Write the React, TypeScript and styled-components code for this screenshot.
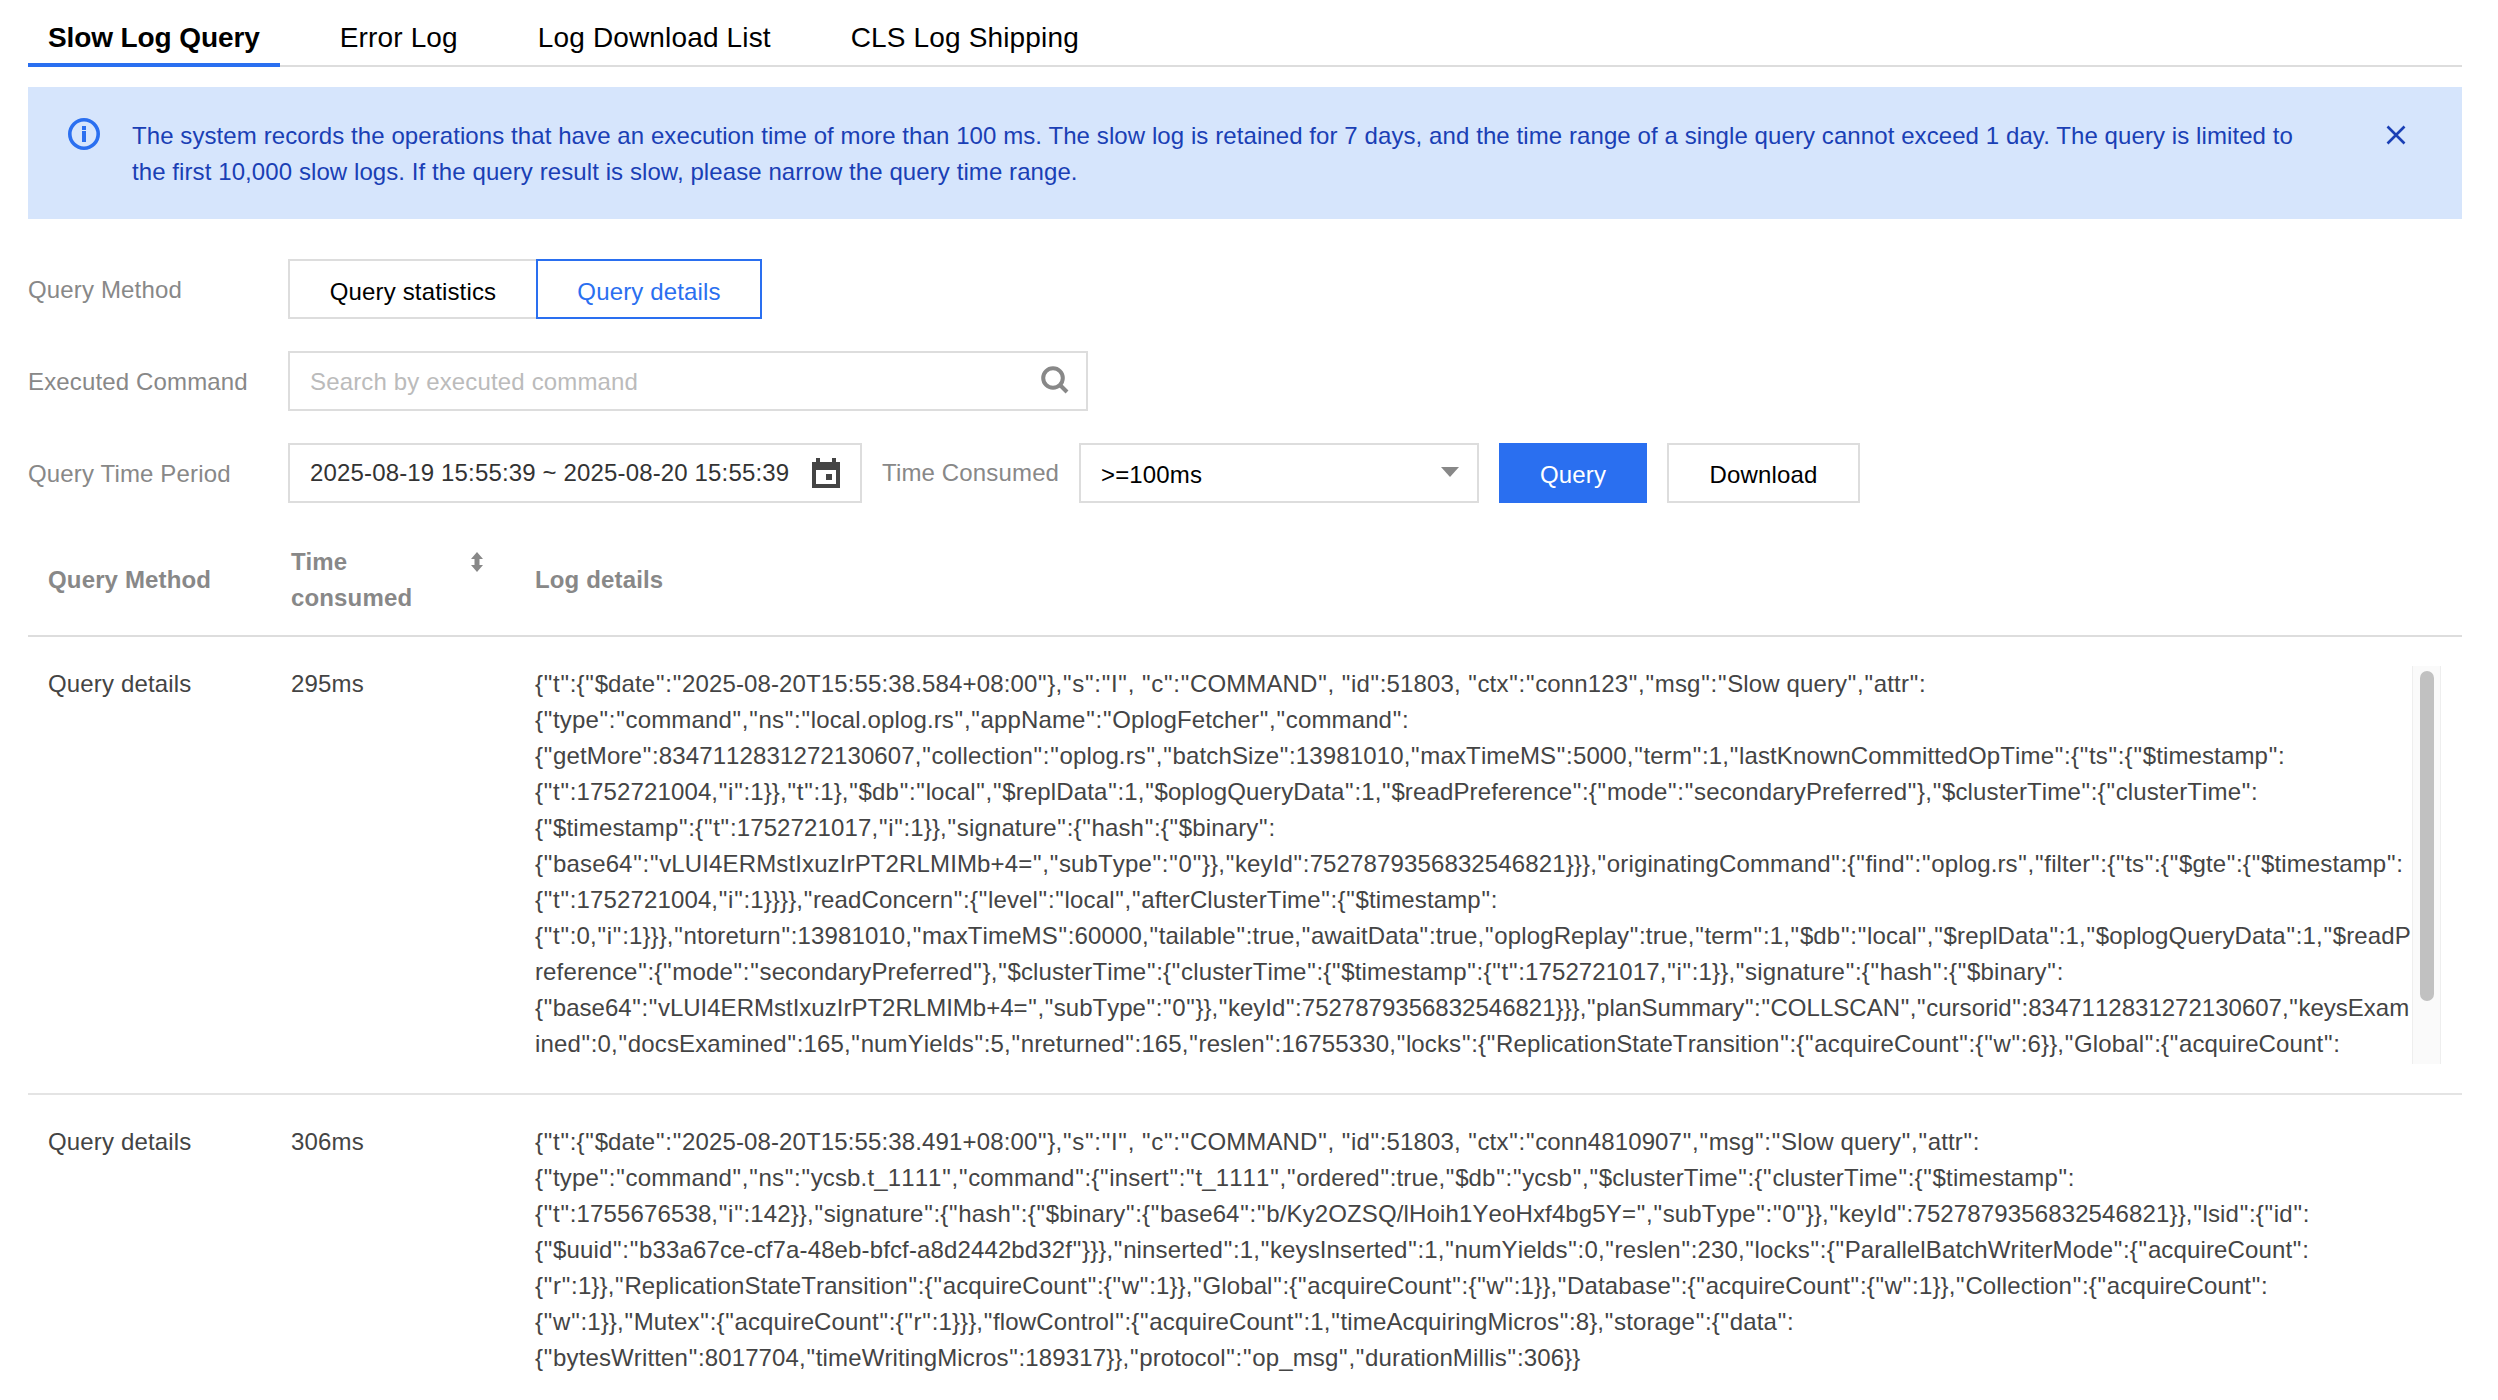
import styled, { createGlobalStyle } from 'styled-components';

const GlobalStyle = createGlobalStyle`
  html, body {
    margin: 0;
    padding: 0;
    background: #fff;
  }
  body {
    font-family: "Liberation Sans", Arial, sans-serif;
    font-size: 24px;
    line-height: 36px;
    letter-spacing: 0.15px;
    color: #444;
  }
  * {
    box-sizing: border-box;
  }
`;

const Page = styled.div`
  width: 2498px;
  height: 1400px;
  padding: 0 36px 0 28px;
  overflow: hidden;
`;

const Tabs = styled.nav`
  display: flex;
  height: 67px;
  border-bottom: 2px solid #ddd;
`;

const Tab = styled.a<{ $active?: boolean }>`
  height: 67px;
  padding: 0 20px;
  margin-right: 40px;
  font-size: 28px;
  line-height: 76px;
  color: #000;
  font-weight: ${(p) => (p.$active ? 700 : 400)};
  letter-spacing: ${(p) => (p.$active ? '-0.1px' : '0.15px')};
  border-bottom: 4px solid ${(p) => (p.$active ? '#2a6ff0' : 'transparent')};
`;

const Alert = styled.div`
  display: flex;
  margin-top: 20px;
  height: 132px;
  padding: 31px 56px 0 40px;
  background: #d6e5fc;
  color: #1a3fb5;
  letter-spacing: 0.085px;
`;

const InfoIcon = styled.svg`
  flex: none;
  width: 32px;
  height: 32px;
  margin-right: 32px;
`;

const AlertText = styled.p`
  flex: 1;
  margin: 0;
`;

const CloseIcon = styled.svg`
  flex: none;
  width: 20px;
  height: 20px;
  margin-top: 7px;
`;

const Form = styled.div`
  display: flex;
  flex-direction: column;
  gap: 32px;
  margin-top: 40px;
`;

const FormRow = styled.div`
  display: flex;
  align-items: center;
  height: 60px;
`;

const Label = styled.label`
  flex: none;
  width: 260px;
  padding-top: 1px;
  color: #888;
`;

const InlineLabel = styled(Label)`
  width: 177px;
  margin: 0 20px;
  padding-top: 0;
  white-space: nowrap;
`;

const Segment = styled.button<{ $active?: boolean }>`
  height: 60px;
  padding: 5px 0 0;
  font: inherit;
  letter-spacing: inherit;
  background: #fff;
  color: ${(p) => (p.$active ? '#2a6ff0' : '#000')};
  border: 2px solid ${(p) => (p.$active ? '#2a6ff0' : '#ddd')};
  border-right-width: ${(p) => (p.$active ? '2px' : '0')};
  width: ${(p) => (p.$active ? '226px' : '248px')};
`;

const Field = styled.div<{ $width: number }>`
  display: flex;
  align-items: center;
  justify-content: space-between;
  flex: none;
  width: ${(p) => p.$width}px;
  height: 60px;
  padding: 0 20px;
  background: #fff;
  border: 2px solid #ddd;
  color: #000;
`;

const SearchField = styled(Field)`
  padding-right: 17px;
`;

const Placeholder = styled.span`
  padding-top: 2px;
  color: #bbb;
`;

const SearchIcon = styled.svg`
  width: 28px;
  height: 28px;
  margin-top: -2px;
`;

const DateField = styled(Field)`
  color: #333;
  padding-right: 20px;
`;

const SelectField = styled(Field)`
  padding: 3px 20px 0;
`;

const Caret = styled.span`
  width: 0;
  height: 0;
  margin: -6px -2px 0 0;
  border-left: 9px solid transparent;
  border-right: 9px solid transparent;
  border-top: 10px solid #888;
`;

const Action = styled.button<{ $primary?: boolean }>`
  flex: none;
  height: 60px;
  margin-left: 20px;
  padding: 4px 0 0;
  font: inherit;
  letter-spacing: inherit;
  background: ${(p) => (p.$primary ? '#2a6ff0' : '#fff')};
  color: ${(p) => (p.$primary ? '#fff' : '#000')};
  border: 2px solid ${(p) => (p.$primary ? '#2a6ff0' : '#ddd')};
  width: ${(p) => (p.$primary ? '148px' : '193px')};
`;

const Table = styled.div`
  margin-top: 20px;
`;

const Row = styled.div`
  display: grid;
  grid-template-columns: 243px 244px 1fr;
  border-bottom: 2px solid #e4e4e4;

  &:last-child {
    border-bottom: 0;
  }
`;

const HeaderRow = styled(Row)`
  align-items: center;
  height: 114px;
  padding-top: 2px;
  border-bottom-color: #ddd;
  color: #888;
  font-weight: 700;
`;

const HeaderCell = styled.div`
  padding: 0 20px;
`;

const SortHeader = styled(HeaderCell)`
  display: flex;
  justify-content: space-between;
  padding-right: 30px;
  padding-left: 20px;
`;

const SortName = styled.span`
  width: 130px;
`;

const SortIcon = styled.svg`
  flex: none;
  width: 16px;
  height: 20px;
  margin-top: 8px;
`;

const Cell = styled.div`
  padding: 29px 20px 0;
`;

const LogCell = styled.div`
  display: flex;
  height: 456px;
  padding: 29px 21px 0 20px;
  min-width: 0;
`;

const LogBody = styled.div`
  flex: 1;
  min-width: 0;
  height: 396px;
`;

const LogLine = styled.div<{ $tight?: boolean }>`
  white-space: pre;
  font-kerning: none;
  letter-spacing: ${(p) => (p.$tight ? '0.01px' : '0.13px')};
`;

// the double quotes sit wider in the log text than Liberation Sans sets them
const Quote = styled.span`
  margin: 0 0.64px;
`;

const Track = styled.div`
  flex: none;
  width: 29px;
  height: 398px;
  padding: 5px 6px 0 7px;
  background: #fafafa;
  border-left: 1px solid #eee;
  border-right: 1px solid #eee;
`;

const Thumb = styled.div`
  height: 330px;
  border-radius: 8px;
  background: #c1c1c1;
`;

const firstLog = [
  '{"t":{"$date":"2025-08-20T15:55:38.584+08:00"},"s":"I", "c":"COMMAND", "id":51803, "ctx":"conn123","msg":"Slow query","attr":',
  '{"type":"command","ns":"local.oplog.rs","appName":"OplogFetcher","command":',
  '{"getMore":8347112831272130607,"collection":"oplog.rs","batchSize":13981010,"maxTimeMS":5000,"term":1,"lastKnownCommittedOpTime":{"ts":{"$timestamp":',
  '{"t":1752721004,"i":1}},"t":1},"$db":"local","$replData":1,"$oplogQueryData":1,"$readPreference":{"mode":"secondaryPreferred"},"$clusterTime":{"clusterTime":',
  '{"$timestamp":{"t":1752721017,"i":1}},"signature":{"hash":{"$binary":',
  '{"base64":"vLUI4ERMstIxuzIrPT2RLMIMb+4=","subType":"0"}},"keyId":7527879356832546821}}},"originatingCommand":{"find":"oplog.rs","filter":{"ts":{"$gte":{"$timestamp":',
  '{"t":1752721004,"i":1}}}},"readConcern":{"level":"local","afterClusterTime":{"$timestamp":',
  '{"t":0,"i":1}}},"ntoreturn":13981010,"maxTimeMS":60000,"tailable":true,"awaitData":true,"oplogReplay":true,"term":1,"$db":"local","$replData":1,"$oplogQueryData":1,"$readP',
  'reference":{"mode":"secondaryPreferred"},"$clusterTime":{"clusterTime":{"$timestamp":{"t":1752721017,"i":1}},"signature":{"hash":{"$binary":',
  '{"base64":"vLUI4ERMstIxuzIrPT2RLMIMb+4=","subType":"0"}},"keyId":7527879356832546821}}},"planSummary":"COLLSCAN","cursorid":8347112831272130607,"keysExam',
  'ined":0,"docsExamined":165,"numYields":5,"nreturned":165,"reslen":16755330,"locks":{"ReplicationStateTransition":{"acquireCount":{"w":6}},"Global":{"acquireCount":',
];

const secondLog = [
  '{"t":{"$date":"2025-08-20T15:55:38.491+08:00"},"s":"I", "c":"COMMAND", "id":51803, "ctx":"conn4810907","msg":"Slow query","attr":',
  '{"type":"command","ns":"ycsb.t_1111","command":{"insert":"t_1111","ordered":true,"$db":"ycsb","$clusterTime":{"clusterTime":{"$timestamp":',
  '{"t":1755676538,"i":142}},"signature":{"hash":{"$binary":{"base64":"b/Ky2OZSQ/lHoih1YeoHxf4bg5Y=","subType":"0"}},"keyId":7527879356832546821}},"lsid":{"id":',
  '{"$uuid":"b33a67ce-cf7a-48eb-bfcf-a8d2442bd32f"}}},"ninserted":1,"keysInserted":1,"numYields":0,"reslen":230,"locks":{"ParallelBatchWriterMode":{"acquireCount":',
  '{"r":1}},"ReplicationStateTransition":{"acquireCount":{"w":1}},"Global":{"acquireCount":{"w":1}},"Database":{"acquireCount":{"w":1}},"Collection":{"acquireCount":',
  '{"w":1}},"Mutex":{"acquireCount":{"r":1}}},"flowControl":{"acquireCount":1,"timeAcquiringMicros":8},"storage":{"data":',
  '{"bytesWritten":8017704,"timeWritingMicros":189317}},"protocol":"op_msg","durationMillis":306}}',
];

function LogText({ line }: { line: string }) {
  return (
    <LogLine $tight={line.includes('planSummary')}>
      {line.split(/(")/).map((part, i) => (part === '"' ? <Quote key={i}>"</Quote> : part))}
    </LogLine>
  );
}

function App() {
  return (
    <Page>
      <GlobalStyle />
      <Tabs>
        <Tab $active>Slow Log Query</Tab>
        <Tab>Error Log</Tab>
        <Tab>Log Download List</Tab>
        <Tab>CLS Log Shipping</Tab>
      </Tabs>

      <Alert>
        <InfoIcon viewBox="0 0 32 32">
          <circle cx="16" cy="16" r="14.2" fill="none" stroke="#2a6ff0" strokeWidth="3.6" />
          <rect x="14" y="8" width="4" height="4" fill="#2a6ff0" />
          <rect x="14" y="13" width="4" height="11" fill="#2a6ff0" />
        </InfoIcon>
        <AlertText>
          The system records the operations that have an execution time of more than 100 ms. The slow log is retained
          for 7 days, and the time range of a single query cannot exceed 1 day. The query is limited to
          <br />
          the first 10,000 slow logs. If the query result is slow, please narrow the query time range.
        </AlertText>
        <CloseIcon viewBox="0 0 20 20">
          <path d="M1.5 1.5 18.5 18.5M18.5 1.5 1.5 18.5" fill="none" stroke="#1a3fb5" strokeWidth="2.6" />
        </CloseIcon>
      </Alert>

      <Form>
        <FormRow>
          <Label>Query Method</Label>
          <Segment>Query statistics</Segment>
          <Segment $active>Query details</Segment>
        </FormRow>
        <FormRow>
          <Label>Executed Command</Label>
          <SearchField $width={800}>
            <Placeholder>Search by executed command</Placeholder>
            <SearchIcon viewBox="0 0 28 28">
              <circle cx="12" cy="12" r="9.8" fill="none" stroke="#888" strokeWidth="4" />
              <path d="M18.5 18.5 26 26" fill="none" stroke="#888" strokeWidth="4" />
            </SearchIcon>
          </SearchField>
        </FormRow>
        <FormRow>
          <Label>Query Time Period</Label>
          <DateField $width={574}>
            2025-08-19 15:55:39 ~ 2025-08-20 15:55:39
            <svg width="28" height="30" viewBox="0 0 28 30">
              <path
                fillRule="evenodd"
                fill="#444"
                d="M4 0h4v4h12V0h4v4h4v26H0V4h4zM4 12v14h20V12zM14 16h6v6h-6z"
              />
            </svg>
          </DateField>
          <InlineLabel>Time Consumed</InlineLabel>
          <SelectField $width={400}>
            &gt;=100ms
            <Caret />
          </SelectField>
          <Action $primary>Query</Action>
          <Action>Download</Action>
        </FormRow>
      </Form>

      <Table>
        <HeaderRow>
          <HeaderCell>Query Method</HeaderCell>
          <SortHeader>
            <SortName>Time consumed</SortName>
            <SortIcon viewBox="0 0 16 20">
              <path fill="#888" d="M8 0 14 7H10.5V13H14L8 20 2 13H5.5V7H2z" />
            </SortIcon>
          </SortHeader>
          <HeaderCell>Log details</HeaderCell>
        </HeaderRow>
        <Row>
          <Cell>Query details</Cell>
          <Cell>295ms</Cell>
          <LogCell>
            <LogBody>
              {firstLog.map((line) => (
                <LogText key={line} line={line} />
              ))}
            </LogBody>
            <Track>
              <Thumb />
            </Track>
          </LogCell>
        </Row>
        <Row>
          <Cell>Query details</Cell>
          <Cell>306ms</Cell>
          <Cell>
            {secondLog.map((line) => (
              <LogText key={line} line={line} />
            ))}
          </Cell>
        </Row>
      </Table>
    </Page>
  );
}

export default App;
